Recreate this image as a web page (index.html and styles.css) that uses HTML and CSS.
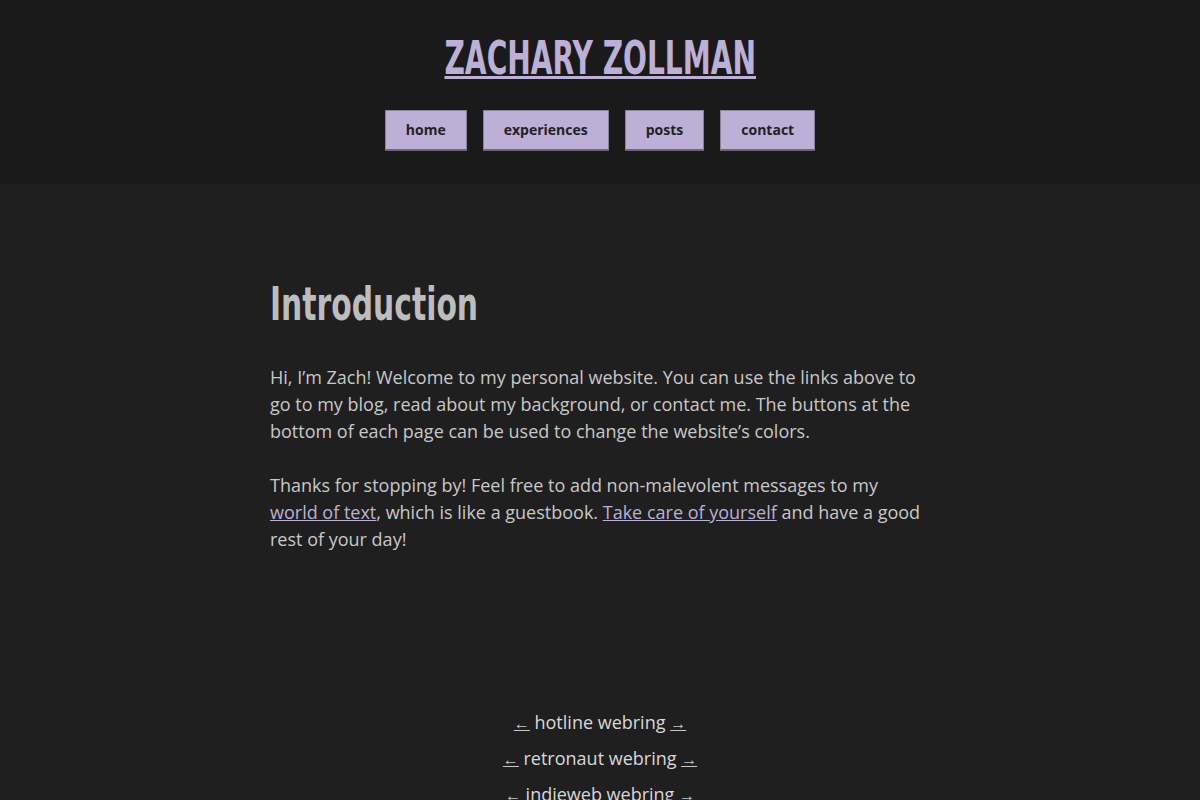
FILE: index.html
```html
<!DOCTYPE html>
<html lang="en">
<head>
  <meta charset="UTF-8">
  <meta name="viewport" content="width=device-width, initial-scale=1.0">
  <title>Zachary Zollman</title>
  <link rel="stylesheet" href="styles.css">
</head>
<body>
  <header class="header">
    <h1 class="site-title"><a href="#">ZACHARY ZOLLMAN</a></h1>
    <nav class="nav">
      <a class="nav-btn" href="#">home</a>
      <a class="nav-btn" href="#">experiences</a>
      <a class="nav-btn" href="#">posts</a>
      <a class="nav-btn" href="#">contact</a>
    </nav>
  </header>

  <main class="content">
    <h2 class="page-title">Introduction</h2>
    <p>Hi, I’m Zach! Welcome to my personal website. You can use the links above to go to my blog, read about my background, or contact me. The buttons at the bottom of each page can be used to change the website’s colors.</p>
    <p>Thanks for stopping by! Feel free to add non-malevolent messages to my <a href="#">world of text</a>, which is like a guestbook. <a href="#">Take care of yourself</a> and have a good rest of your day!</p>
  </main>

  <footer class="webrings">
    <p><a href="#">←</a> hotline webring <a href="#">→</a></p>
    <p><a href="#">←</a> retronaut webring <a href="#">→</a></p>
    <p><a href="#">←</a> indieweb webring <a href="#">→</a></p>
  </footer>
</body>
</html>
```

FILE: styles.css
```css
body {
  margin: 0;
  background-color: #1f1f1f;
  color: #c8c8c8;
  font-family: 'Open Sans', 'Noto Sans', sans-serif;
  font-size: 18px;
  line-height: 27px;
}

a {
  color: #bcb0d6;
}

.header {
  background-color: #1b1a1b;
  padding: 30px 0 33px;
  text-align: center;
}

.site-title {
  margin: 0;
  font-family: 'DejaVu Sans Condensed', 'DejaVu Sans', sans-serif;
  font-size: 47px;
  line-height: 56px;
  font-weight: bold;
}

.site-title a {
  display: inline-block;
  color: #bcb0d6;
  text-decoration-thickness: 3px;
  transform: scaleX(0.665);
}

.nav {
  display: flex;
  justify-content: center;
  gap: 16px;
  margin-top: 24px;
}

.nav-btn {
  display: block;
  padding: 0 20px;
  height: 38px;
  line-height: 37px;
  background-color: #bcb0d6;
  color: #222;
  font-size: 14px;
  font-weight: bold;
  text-decoration: none;
  border: 1px solid #8a819c;
  border-bottom: 2px solid #6c6676;
  border-radius: 1px;
}

.content {
  width: 660px;
  margin: 0 auto;
  padding: 92px 0 129px;
}

.page-title {
  margin: 0 0 32px;
  font-family: 'DejaVu Sans Condensed', 'DejaVu Sans', sans-serif;
  font-size: 46px;
  line-height: 56px;
  color: #bdbdbd;
  transform: scaleX(0.72);
  transform-origin: left;
}

.content p {
  margin: 0 0 27px;
}

.webrings {
  text-align: center;
  color: #d8d8d8;
}

.webrings p {
  margin: 0 0 9px;
}

.webrings a {
  font-size: 16px;
  line-height: 1;
  color: #c8c8c8;
}
```
